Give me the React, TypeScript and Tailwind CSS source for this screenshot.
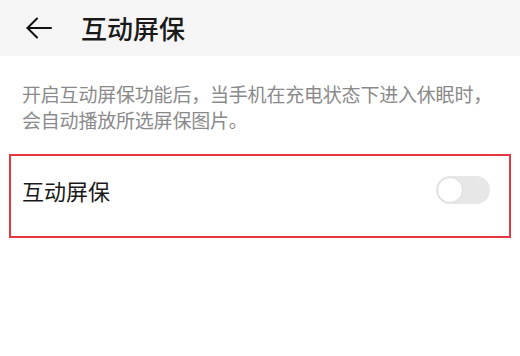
export default function App() {
  const font = { fontFamily: '"Noto Sans CJK SC", "Noto Sans", sans-serif' };
  return (
    <div className="w-[520px] h-[356px] bg-white overflow-hidden" style={font}>
      <div className="h-[56px] bg-[#f5f5f5] flex items-center">
        <div className="ml-[26px] w-[26px] h-[22px] flex items-center">
          <svg width="26" height="22" viewBox="0 0 26 22" fill="none" stroke="#111" strokeWidth="2" strokeLinecap="round" strokeLinejoin="round">
            <path d="M1.5 11 H25" />
            <path d="M11 1.5 L1.5 11 L11 20.5" />
          </svg>
        </div>
        <div className="ml-[29px] text-[26px] leading-[30px] font-medium text-[#1a1a1a] -mt-[1px]">互动屏保</div>
      </div>
      <div className="pt-[25px] px-[22px] text-[19px] leading-[26px] text-[#8a8a8a] tracking-[-0.2px]">
        开启互动屏保功能后，当手机在充电状态下进入休眠时，会自动播放所选屏保图片。
      </div>
      <div className="mt-[21px] ml-[9px] w-[502px] h-[84px] border-2 border-[#e5373d] pt-[20px] pb-[32px] pl-[11px] pr-[19px] flex items-center justify-between">
        <div className="text-[22px] leading-[28px] text-[#1a1a1a]">互动屏保</div>
        <div className="w-[54px] h-[28px] rounded-full bg-[#e7e7e7] flex items-center pl-[1px]">
          <div className="w-[26px] h-[26px] rounded-full bg-white border border-[#dcdcdc]" />
        </div>
      </div>
    </div>
  );
}
